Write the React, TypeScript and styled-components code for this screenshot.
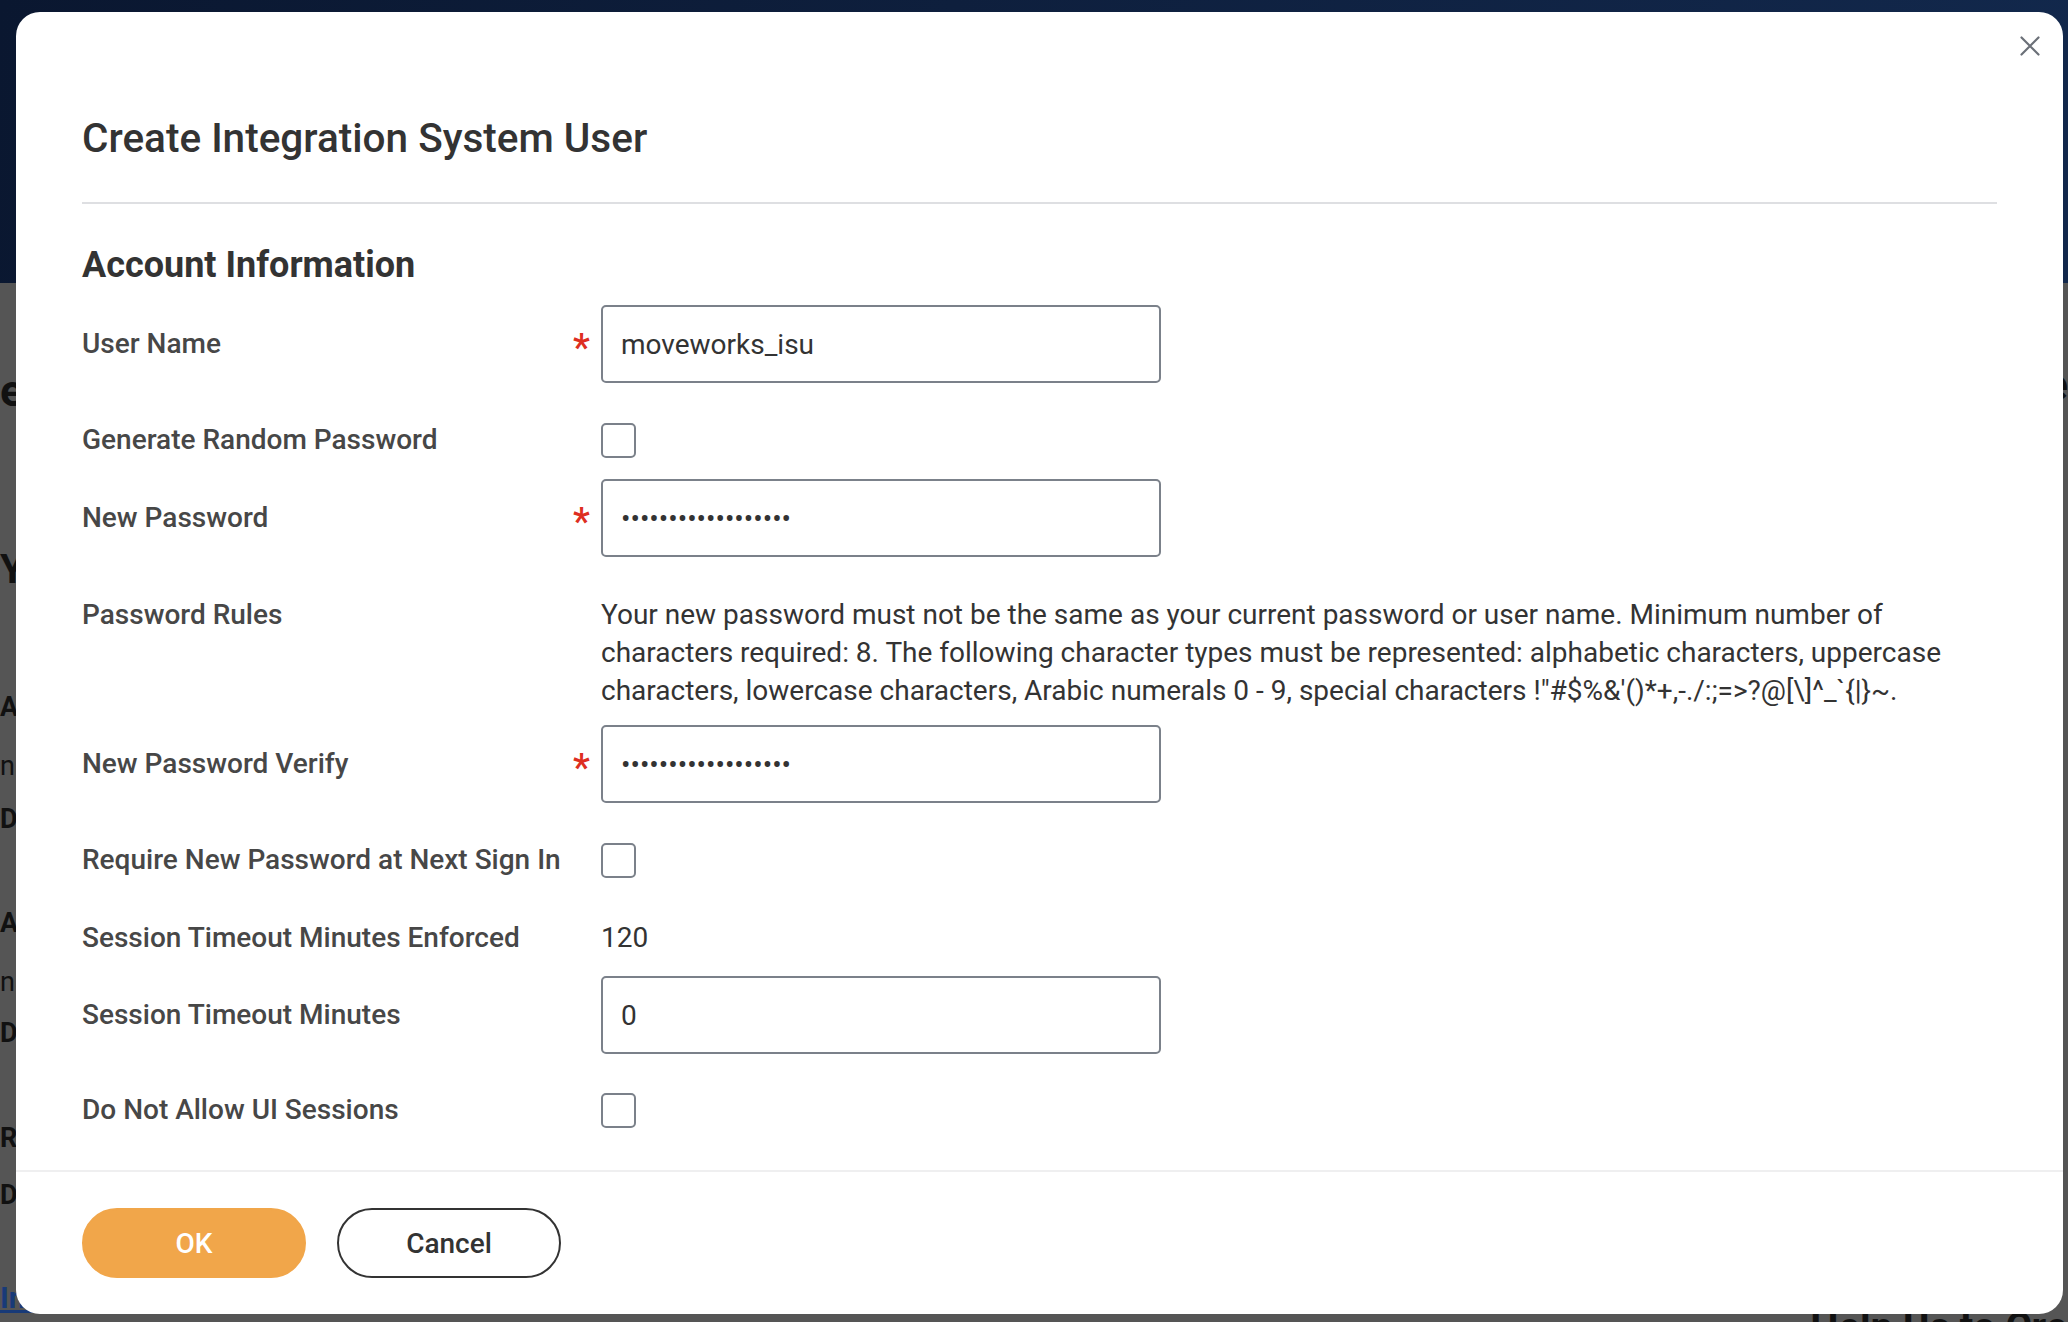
import React from "react";
import styled, { createGlobalStyle } from "styled-components";

const GlobalStyle = createGlobalStyle`
  html, body {
    margin: 0;
    padding: 0;
  }
  body {
    font-family: Roboto, "Liberation Sans", Arial, sans-serif;
    background: #555555;
    overflow: hidden;
  }
  * {
    box-sizing: border-box;
  }
`;

const Page = styled.div`
  position: relative;
  width: 2068px;
  height: 1322px;
  overflow: hidden;
  background: #555555;
`;

const Banner = styled.div`
  height: 283px;
  background: linear-gradient(100deg, #0a1730 0%, #0e1f3d 45%, #12284c 100%);
`;

const Backdrop = styled.div`
  display: flex;
  justify-content: space-between;
  height: 1039px;
`;

const BackColumn = styled.div`
  display: flex;
  flex-direction: column;
  color: #111;
  white-space: nowrap;
`;

const BackRight = styled(BackColumn)`
  align-items: flex-end;
  justify-content: space-between;
`;

const BackText = styled.div<{ $size: number; $weight: number; $top: number }>`
  margin-top: ${(p) => p.$top}px;
  font-size: ${(p) => p.$size}px;
  font-weight: ${(p) => p.$weight};
  line-height: 1.2;
`;

const BackLink = styled.a`
  margin-top: 69px;
  font-size: 30px;
  font-weight: 700;
  color: #183a78;
  text-decoration: underline;
`;

const BackFooter = styled.div`
  margin-bottom: -30px;
  margin-right: -56px;
  font-size: 40px;
  font-weight: 700;
  line-height: 48px;
  color: #111;
`;

const Overlay = styled.div`
  position: absolute;
  inset: 0;
  display: flex;
  padding: 12px 5px 8px 16px;
`;

const Dialog = styled.div`
  position: relative;
  flex: 1;
  display: flex;
  flex-direction: column;
  background: #ffffff;
  border-radius: 24px;
  overflow: hidden;
`;

const CloseButton = styled.button`
  position: absolute;
  top: 24px;
  right: 23px;
  width: 20px;
  height: 20px;
  padding: 0;
  border: 0;
  background: none;
  cursor: pointer;
  display: flex;
`;

const Header = styled.div`
  padding: 102px 66px 0;
`;

const Title = styled.h1`
  margin: 0;
  padding-bottom: 40px;
  border-bottom: 2px solid #dedfe2;
  font-size: 40.5px;
  line-height: 48px;
  font-weight: 500;
  color: #333333;
`;

const Body = styled.div`
  flex: 1;
  padding: 40px 66px 0;
`;

const SectionTitle = styled.h2`
  margin: 0;
  font-size: 36px;
  line-height: 42px;
  font-weight: 700;
  color: #333333;
`;

const FieldRow = styled.div<{ $top: number; $align?: string }>`
  display: grid;
  grid-template-columns: 491px 28px 1fr;
  align-items: ${(p) => p.$align ?? "center"};
  margin-top: ${(p) => p.$top}px;
`;

const Label = styled.label`
  font-size: 28px;
  line-height: 38px;
  font-weight: 500;
  color: #474747;
`;

const Required = styled.span`
  padding-top: 8px;
  font-size: 38px;
  line-height: 1;
  font-weight: 500;
  color: #de2e21;
`;

const TextInput = styled.input`
  width: 560px;
  height: 78px;
  padding: 0 18px;
  border: 2px solid #7b818a;
  border-radius: 5px;
  background: #ffffff;
  font-family: Roboto, "Liberation Sans", Arial, sans-serif;
  font-size: 28px;
  font-weight: 400;
  color: #333333;
  outline: none;
`;

const CheckBox = styled.input`
  appearance: none;
  margin: 0;
  width: 35px;
  height: 35px;
  border: 2px solid #7b818a;
  border-radius: 5px;
  background: #ffffff;
`;

const StaticText = styled.div`
  font-size: 28px;
  line-height: 38px;
  font-weight: 400;
  color: #333333;
`;

const Footer = styled.div`
  display: flex;
  gap: 31px;
  padding: 36px 66px;
  border-top: 2px solid #efeff0;
`;

const Button = styled.button<{ $primary?: boolean }>`
  width: 224px;
  height: 70px;
  border-radius: 35px;
  border: 2px solid ${(p) => (p.$primary ? "#f1a64a" : "#333333")};
  background: ${(p) => (p.$primary ? "#f1a64a" : "#ffffff")};
  color: ${(p) => (p.$primary ? "#ffffff" : "#333333")};
  font-family: Roboto, "Liberation Sans", Arial, sans-serif;
  font-size: 28px;
  font-weight: 500;
  cursor: pointer;
`;

const backLeft = [
  { text: "e Integration System User", size: 44, weight: 700, top: 82 },
  { text: "Your Integration System Users", size: 40, weight: 700, top: 128 },
  { text: "A: Account Information", size: 27, weight: 700, top: 97 },
  { text: "name of the integration user", size: 27, weight: 400, top: 27 },
  { text: "Details", size: 27, weight: 700, top: 20 },
  { text: "A: Authentication", size: 27, weight: 700, top: 72 },
  { text: "name of the integration user", size: 27, weight: 400, top: 27 },
  { text: "Details", size: 27, weight: 700, top: 18 },
  { text: "Reset Password", size: 27, weight: 700, top: 73 },
  { text: "Details", size: 27, weight: 700, top: 24 },
];

function CloseIcon() {
  return (
    <svg width="20" height="20" viewBox="0 0 20 20">
      <path
        d="M1.5 1.5 L18.5 18.5 M18.5 1.5 L1.5 18.5"
        stroke="#6b7078"
        strokeWidth="2.2"
        strokeLinecap="round"
      />
    </svg>
  );
}

export default function App() {
  return (
    <>
      <GlobalStyle />
      <Page>
        <Banner />
        <Backdrop>
          <BackColumn>
            {backLeft.map((item, i) => (
              <BackText key={i} $size={item.size} $weight={item.weight} $top={item.top}>
                {item.text}
              </BackText>
            ))}
            <BackLink>Integration</BackLink>
          </BackColumn>
          <BackRight>
            <BackText $size={44} $weight={700} $top={76}>
              e
            </BackText>
            <BackFooter>Help Us to Create</BackFooter>
          </BackRight>
        </Backdrop>

        <Overlay>
          <Dialog>
            <CloseButton aria-label="Close">
              <CloseIcon />
            </CloseButton>
            <Header>
              <Title>Create Integration System User</Title>
            </Header>
            <Body>
              <SectionTitle>Account Information</SectionTitle>

              <FieldRow $top={19}>
                <Label>User Name</Label>
                <Required>*</Required>
                <TextInput readOnly value="moveworks_isu" />
              </FieldRow>

              <FieldRow $top={38}>
                <Label>Generate Random Password</Label>
                <span />
                <CheckBox type="checkbox" readOnly />
              </FieldRow>

              <FieldRow $top={20}>
                <Label>New Password</Label>
                <Required>*</Required>
                <TextInput type="password" readOnly value="xxxxxxxxxxxxxxxxxx" />
              </FieldRow>

              <FieldRow $top={39} $align="start">
                <Label>Password Rules</Label>
                <span />
                <StaticText>
                  Your new password must not be the same as your current password or user name. Minimum
                  number of characters required: 8. The following character types must be represented:
                  alphabetic characters, uppercase characters, lowercase characters, Arabic numerals 0 - 9,
                  special characters !"#$%&amp;'()*+,-./:;=&gt;?@[\]^_`{"{|}"}~.
                </StaticText>
              </FieldRow>

              <FieldRow $top={15}>
                <Label>New Password Verify</Label>
                <Required>*</Required>
                <TextInput type="password" readOnly value="xxxxxxxxxxxxxxxxxx" />
              </FieldRow>

              <FieldRow $top={38}>
                <Label>Require New Password at Next Sign In</Label>
                <span />
                <CheckBox type="checkbox" readOnly />
              </FieldRow>

              <FieldRow $top={40}>
                <Label>Session Timeout Minutes Enforced</Label>
                <span />
                <StaticText>120</StaticText>
              </FieldRow>

              <FieldRow $top={19}>
                <Label>Session Timeout Minutes</Label>
                <span />
                <TextInput readOnly value="0" />
              </FieldRow>

              <FieldRow $top={37}>
                <Label>Do Not Allow UI Sessions</Label>
                <span />
                <CheckBox type="checkbox" readOnly />
              </FieldRow>
            </Body>
            <Footer>
              <Button $primary>OK</Button>
              <Button>Cancel</Button>
            </Footer>
          </Dialog>
        </Overlay>
      </Page>
    </>
  );
}
